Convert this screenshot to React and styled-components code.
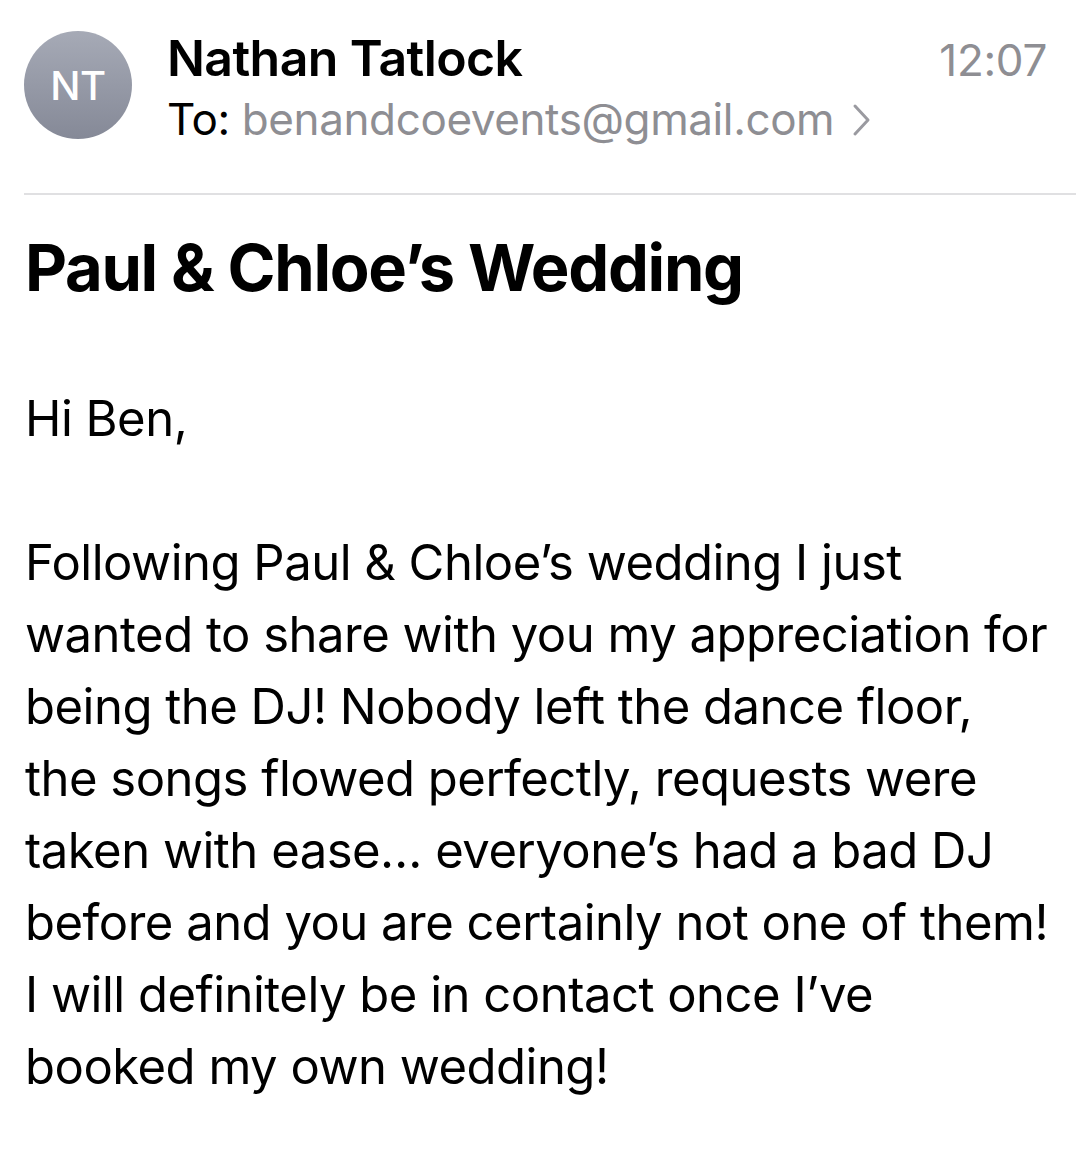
import styled, { createGlobalStyle } from 'styled-components';

const GlobalStyle = createGlobalStyle`
  html, body {
    margin: 0;
    padding: 0;
    background: #ffffff;
  }
  body {
    font-family: Inter, "Noto Sans", "Liberation Sans", sans-serif;
    color: #000000;
    -webkit-font-smoothing: antialiased;
  }
`;

const Page = styled.div`
  width: 1076px;
  min-height: 1160px;
  background: #ffffff;
`;

const Header = styled.div`
  display: flex;
  align-items: flex-start;
  padding: 28px 29px 0 24px;
`;

const Avatar = styled.div`
  flex: 0 0 auto;
  width: 108px;
  height: 108px;
  margin-top: 3px;
  border-radius: 50%;
  background: linear-gradient(180deg, #a6aab6 0%, #858997 100%);
  display: flex;
  align-items: center;
  justify-content: center;
  color: #ffffff;
  font-size: 40px;
  font-weight: 500;
  letter-spacing: -0.5px;
`;

const HeaderInfo = styled.div`
  flex: 1;
  margin-left: 35px;
  display: flex;
  flex-direction: column;
`;

const NameRow = styled.div`
  display: flex;
  align-items: baseline;
  justify-content: space-between;
`;

const SenderName = styled.span`
  font-size: 50px;
  line-height: 60px;
  font-weight: 600;
  letter-spacing: -0.6px;
`;

const Time = styled.span`
  font-size: 44px;
  line-height: 60px;
  color: #8e8e93;
  letter-spacing: -0.3px;
`;

const RecipientRow = styled.div`
  display: flex;
  align-items: center;
  margin-top: 1px;
  font-size: 44px;
  line-height: 56px;
  letter-spacing: -0.4px;
`;

const Label = styled.span`
  color: #000000;
  margin-right: 12px;
`;

const Address = styled.span`
  color: #8e8e93;
`;

const Chevron = styled.svg`
  margin-left: 18px;
  margin-top: 2px;
`;

const Divider = styled.hr`
  margin: 46px 0 0 24px;
  border: none;
  border-top: 2px solid #e0e0e2;
`;

const Content = styled.div`
  padding: 0 28px 0 25px;
`;

const Subject = styled.h1`
  margin: 33px 0 0;
  font-size: 65px;
  line-height: 80px;
  font-weight: 700;
  letter-spacing: -1.3px;
`;

const Paragraph = styled.p`
  margin: ${(props) => props.$top}px 0 0;
  font-size: 49px;
  line-height: 72px;
  font-weight: 400;
  letter-spacing: -0.5px;
  white-space: nowrap;
`;

const bodyLines = [
  'Following Paul & Chloe\u2019s wedding I just',
  'wanted to share with you my appreciation for',
  'being the DJ! Nobody left the dance floor,',
  'the songs flowed perfectly, requests were',
  'taken with ease\u2026 everyone\u2019s had a bad DJ',
  'before and you are certainly not one of them!',
  'I will definitely be in contact once I\u2019ve',
  'booked my own wedding!',
];

const App = () => {
  return (
    <Page>
      <GlobalStyle />
      <Header>
        <Avatar>NT</Avatar>
        <HeaderInfo>
          <NameRow>
            <SenderName>Nathan Tatlock</SenderName>
            <Time>12:07</Time>
          </NameRow>
          <RecipientRow>
            <Label>To:</Label>
            <Address>benandcoevents@gmail.com</Address>
            <Chevron width="20" height="34" viewBox="0 0 20 34">
              <path
                d="M3 3 L16 17 L3 31"
                fill="none"
                stroke="#9a9aa0"
                strokeWidth="3"
                strokeLinecap="round"
                strokeLinejoin="round"
              />
            </Chevron>
          </RecipientRow>
        </HeaderInfo>
      </Header>
      <Divider />
      <Content>
        <Subject>Paul &amp; Chloe&rsquo;s Wedding</Subject>
        <Paragraph $top={75}>Hi Ben,</Paragraph>
        <Paragraph $top={72}>
          {bodyLines.map((line, i) => (
            <span key={i}>
              {line}
              {i < bodyLines.length - 1 && <br />}
            </span>
          ))}
        </Paragraph>
      </Content>
    </Page>
  );
};

export default App;
